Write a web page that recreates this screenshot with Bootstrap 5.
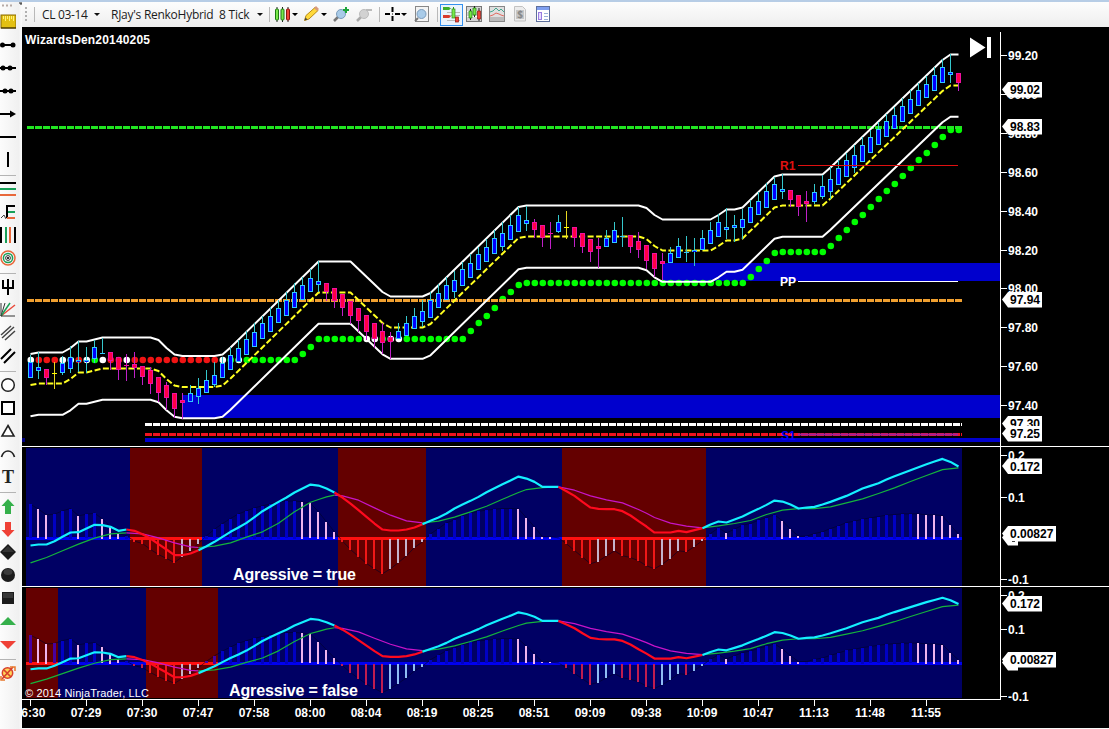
<!DOCTYPE html>
<html lang="en">
<head>
    <meta charset="UTF-8">
    <meta name="viewport" content="width=device-width, initial-scale=1.0">
    <title>CL 03-14 - Chart</title>
    <link rel="stylesheet" href="https://cdn.jsdelivr.net/npm/bootstrap@5.3.0/dist/css/bootstrap.min.css">
    <style>
        html, body {
            height: 100%;
            margin: 0;
            overflow: hidden;
        }
        body {
            background: #fafafa;
            font-family: "Liberation Sans", sans-serif;
            font-size: 12px;
            border-top: 2px solid #b7cde6;
        }
        svg {
            display: block;
            flex: none;
        }
        .draw-tools {
            width: 22px;
            flex: none;
            background: linear-gradient(90deg, #fcfcfc, #f0f0f0 85%, #fbfbfb);
        }
        .tool-gap {
            width: 16px;
            height: 6px;
            flex: none;
            padding-top: 3px;
        }
        .tool-gap::before {
            content: "";
            display: block;
            border-top: 1px solid #b4b4b4;
        }
        .chart-bar {
            height: 25px;
            flex: none;
            background: linear-gradient(#fdfdfd, #eeeeee);
            color: #1c1c1c;
            font-family: "Open Sans", "Noto Sans", sans-serif;
            font-size: 12px;
            line-height: 24px;
            white-space: pre;
        }
        .bar-split {
            width: 1px;
            height: 15px;
            background: #b9b9b9;
            flex: none;
        }
        .picker-symbol { width: 52px; margin-left: 7px; letter-spacing: -.35px; }
        .picker-period { width: 146px; margin-left: 11px; letter-spacing: -.27px; }
        .drop {
            width: 0;
            height: 0;
            flex: none;
            border: 3px solid transparent;
            border-top-color: #111;
            border-bottom: 0;
        }
        .tool-on {
            width: 23px;
            height: 22px;
            flex: none;
            border: 1px solid #3390ee;
            background: #eaf3fc;
        }
        .panels {
            background: #000;
        }
        .panels text {
            font-weight: bold;
            font-size: 12px;
            fill: #fff;
        }
        #macdTrue, #macdFalse { overflow: visible; }
        .panels .note { font-size: 16px; }
        .panels .rights { font-weight: normal; font-size: 11px; }
        .panels .tag-text { fill: #000; }
    </style>
</head>
<body>
<div class="d-flex h-100">

    <!-- Drawing tools -->
    <div class="draw-tools d-flex flex-column">
        <svg width="22" height="9" viewBox="0 2 22 9"><path d="M2 5.5h2M6 5.5h2M10 5.5h2" stroke="#b5aaa5" stroke-width="2"/><path d="M19 3h4M21 3v2" stroke="#222"/></svg>
        <svg width="16" height="23" viewBox="0 -11 16 23"><rect x="1" y="-7" width="15" height="13" fill="#e3c012" stroke="#8a6b00"/><path d="M3.5-6v3M5.5-6v5M7.5-6v3M9.5-6v5M11.5-6v3M13.5-6v5" stroke="#fff17a"/><path d="M1 6h15" stroke="#2c2200"/></svg>
        <svg width="16" height="23" viewBox="0 -11 16 23"><path d="M2 0h12" stroke="#000" stroke-width="2"/><circle cx="2.5" r="2.5"/><circle cx="13" r="2.5"/></svg>
        <svg width="16" height="23" viewBox="0 -11 16 23"><path d="M0 0h16" stroke="#000" stroke-width="2"/><circle cx="3" r="2.5"/><circle cx="10" r="2.5"/></svg>
        <svg width="16" height="23" viewBox="0 -11 16 23"><path d="M0 0h16" stroke="#000" stroke-width="2"/><circle cx="5" r="2.5"/><circle cx="11" r="2.5"/></svg>
        <svg width="16" height="23" viewBox="0 -11 16 23"><path d="M0 0h14" stroke="#000" stroke-width="2"/><path d="M10-3.5L16 0l-6 3.5z"/></svg>
        <svg width="16" height="23" viewBox="0 -11 16 23"><path d="M0 0h16" stroke="#000" stroke-width="2"/></svg>
        <svg width="16" height="23" viewBox="0 -11 16 23"><path d="M8-8v15" stroke="#000" stroke-width="2"/></svg>
        <div class="tool-gap"></div>
        <svg width="16" height="23" viewBox="0 -11 16 23"><path d="M0-6h16" stroke="#000" stroke-width="2"/><path d="M0 0h16" stroke="#18a058" stroke-width="2"/><path d="M0 6h16" stroke="#e8683a" stroke-width="2"/></svg>
        <svg width="16" height="23" viewBox="0 -11 16 23"><path d="M15-6H7V6" fill="none" stroke="#000" stroke-width="2"/><path d="M8 0h7" stroke="#18a058" stroke-width="2"/><path d="M7 6h8" stroke="#e8683a" stroke-width="2"/><path d="M1 6l3-3 2 4" fill="none" stroke="#444"/></svg>
        <svg width="16" height="23" viewBox="0 -11 16 23"><path d="M1-8V8M15-8V8" stroke="#000" stroke-width="2"/><path d="M6-8V8" stroke="#18a058" stroke-width="2"/><path d="M10-8V8" stroke="#e8683a" stroke-width="2"/></svg>
        <svg width="16" height="23" viewBox="0 -11 16 23"><g fill="none" stroke-width="1.5"><circle cx="8" r="7" stroke="#e8683a"/><circle cx="8" r="4.6" stroke="#18a058"/></g><circle cx="8" r="2.4" fill="#fff" stroke="#333"/><circle cx="8" r="1.1"/></svg>
        <div class="tool-gap"></div>
        <svg width="16" height="23" viewBox="0 -11 16 23"><path d="M3-7v8h10v-8M8-8V8" fill="none" stroke="#000" stroke-width="2"/></svg>
        <svg width="16" height="23" viewBox="0 -11 16 23"><path d="M1 6L5-7" stroke="#333"/><path d="M1 6L15-5" stroke="#e84a3a" stroke-width="1.5"/><path d="M1 6L10-7" stroke="#18a058" stroke-width="1.5"/><path d="M1-7V6h14" fill="none" stroke="#333"/></svg>
        <svg width="16" height="23" viewBox="0 -11 16 23"><path d="M1 2L11-7M2 5L14-6M5 7L15-2" stroke="#444" stroke-width="1.5"/></svg>
        <svg width="16" height="23" viewBox="0 -11 16 23"><path d="M1 3L11-7M4 7L15-4" stroke="#000" stroke-width="2"/></svg>
        <div class="tool-gap"></div>
        <svg width="16" height="23" viewBox="0 -11 16 23"><circle cx="8" r="6.3" fill="#fff" stroke="#222" stroke-width="1.5"/></svg>
        <svg width="16" height="23" viewBox="0 -11 16 23"><rect x="2" y="-6" width="12" height="12" fill="#fff" stroke="#000" stroke-width="2"/></svg>
        <svg width="16" height="23" viewBox="0 -11 16 23"><path d="M8-5.5L14 5H2z" fill="#fff" stroke="#222" stroke-width="1.6"/></svg>
        <svg width="16" height="23" viewBox="0 -11 16 23"><path d="M1.500 3C4-5 12-5 14.500 3" fill="none" stroke="#222" stroke-width="1.7"/></svg>
        <svg width="16" height="23" viewBox="0 -11 16 23"><text x="8" y="6" text-anchor="middle" font-family="Liberation Serif, serif" font-weight="bold" font-size="18" fill="#222">T</text></svg>
        <div class="tool-gap"></div>
        <svg width="16" height="23" viewBox="0 -11 16 23"><path d="M8-7l6.500 7H11v8H5V0H1.500z" fill="#35b04b"/></svg>
        <svg width="16" height="23" viewBox="0 -11 16 23"><path d="M8 8L1.500 1H5v-8h6v8h3.500z" fill="#ef4136"/></svg>
        <svg width="16" height="23" viewBox="0 -11 16 23"><path d="M8-8l8 8-8 8-8-8z" fill="#1a1a1a"/><path d="M8-6l6 6H2z" fill="#333"/></svg>
        <svg width="16" height="23" viewBox="0 -11 16 23"><circle cx="8" r="7" fill="#1c1c1c"/><ellipse cx="8" cy="-3" rx="4.500" ry="3" fill="#3c3c3c"/></svg>
        <svg width="16" height="23" viewBox="0 -11 16 23"><path d="M2-6h12V6H2z" fill="#1c1c1c"/><path d="M3-5h10v5H3z" fill="#383838"/></svg>
        <svg width="16" height="23" viewBox="0 -11 16 23"><path d="M8-4l8 8H0z" fill="#35b04b"/></svg>
        <svg width="16" height="23" viewBox="0 -11 16 23"><path d="M8 5l8-8H0z" fill="#ef4136"/></svg>
        <div class="tool-gap"></div>
        <svg width="16" height="23" viewBox="0 -11 16 23"><circle cx="7.500" r="5.200" fill="#ffd45a" stroke="#d8402c" stroke-width="1.500"/><path d="M2 6L13-6M4-3l7 7" stroke="#d8402c" stroke-width="1.700"/><path d="M10-6h5v4M1 3v4h4" fill="none" stroke="#e8782c" stroke-width="1.500"/></svg>
    </div>

    <div class="d-flex flex-column flex-grow-1">
        <!-- Chart toolbar -->
        <div class="chart-bar d-flex align-items-center">
            <svg width="12" height="25" viewBox="22 2 12 25"><path d="M26 7v15" stroke="#b0b0b0" stroke-width="2" stroke-dasharray="2 2"/></svg>
            <div class="bar-split"></div>
            <span class="picker-symbol">CL 03-14</span>
            <i class="drop"></i>
            <span class="picker-period">RJay's RenkoHybrid  8 Tick</span>
            <i class="drop"></i>
            <svg width="6" height="25"></svg>
            <div class="bar-split"></div>

            <svg width="109" height="25" viewBox="270 2 109 25">
                <path d="M277 7v15M282.500 7v15M288 7v15" stroke="#222"/>
                <g stroke="#1d7a10" fill="#79e84a"><rect x="275.500" y="9" width="3" height="11" rx="1"/><rect x="281" y="9" width="3" height="11" rx="1"/></g>
                <rect x="286.500" y="9" width="3" height="11" rx="1" fill="#f04438" stroke="#8c1710"/>
                <path d="M292 13h6l-3 3zM321 13h6l-3 3z"/>
                <path d="M304.500 20.500l1.500-5 9-8 3 3-9 8.500z" fill="#ffd93b" stroke="#b88a14"/>
                <path d="M304.500 20.500l1-3 2 2z" fill="#444"/><path d="M314 8l3 3 2-2-3-3z" fill="#d99a7c"/>
                <path d="M334 21l4-4" stroke="#777" stroke-width="2.500"/>
                <circle cx="341" cy="14" r="4.500" fill="#a9cbe8" stroke="#7b9cbc"/>
                <path d="M346 7v6M343 10h6" stroke="#1ea53a" stroke-width="2"/>
                <path d="M357 21l4-4" stroke="#aaa" stroke-width="2.500"/>
                <circle cx="364" cy="14" r="4.500" fill="#d2d2d2" stroke="#bcbcbc"/>
                <path d="M366 10h6" stroke="#bbb" stroke-width="2"/>
            </svg>
            <div class="bar-split"></div>
            <svg width="57" height="25" viewBox="380 2 57 25">
                <path d="M392.500 7v5M392.500 16v5M385 14h5M395 14h5" stroke="#000" stroke-width="2"/><path d="M392 14h1" stroke="#000"/>
                <path d="M401 13h6l-3 3z"/>
                <rect x="415.500" y="6.500" width="13" height="15" fill="#f4f4f4" stroke="#888"/>
                <path d="M415 21l3-3" stroke="#777" stroke-width="2"/><circle cx="421.500" cy="14" r="4.500" fill="#a9cbe8" stroke="#7b9cbc"/>
            </svg>
            <div class="bar-split"></div>
            <svg width="2" height="25"></svg>
            <div class="tool-on d-flex">
                <svg width="21" height="20" viewBox="441 4 21 20">
                    <path d="M447 11.500h13M447 14.500h13M447 19.500h13" stroke="#b8b8b8"/>
                    <path d="M443 6h6l2 1.500-2 1.500h-6z" fill="#3fae2c"/>
                    <path d="M443 14h6l2 1.500-2 1.500h-6z" fill="#d83a2e"/>
                    <path d="M453.500 6v11" stroke="#2f8f1e"/><rect x="452" y="8" width="3" height="9" fill="#79e84a" stroke="#2f8f1e" stroke-width=".7"/>
                    <rect x="455.500" y="16" width="3" height="5" fill="#f04438" stroke="#8c1710" stroke-width=".7"/>
                </svg>
            </div>
            <svg width="90" height="25" viewBox="463 2 90 25">
                <rect x="466.500" y="6.500" width="15" height="15" fill="#d4d4d4" stroke="#777"/><path d="M467 11.500h14M467 16.500h14" stroke="#fff"/>
                <path d="M470.500 9v11M474.500 6v11M479 8v13" stroke="#222"/>
                <path d="M469 11h3v7h-3zM473 8h3v7h-3z" fill="#79e84a" stroke="#1d7a10" stroke-width=".7"/><path d="M477.500 11h3v8h-3z" fill="#f04438" stroke="#8c1710" stroke-width=".7"/>
                <rect x="489.500" y="6.500" width="15" height="15" fill="#dfdfdf" stroke="#888"/><path d="M490 17h14v4h-14z" fill="#bbb"/>
                <path d="M490 12l3-1 3-3 3 3 2-2 3 3" fill="none" stroke="#46a890"/><path d="M490 16l3-1 3-2 3 1 2 1 3 1" fill="none" stroke="#e06a60"/>
                <path d="M514.500 6.500h8l3 3v11.500h-11z" fill="#ececec" stroke="#c2c2c2"/><rect x="516" y="10" width="8" height="9" fill="#c6c6c6"/>
                <text x="520" y="18" text-anchor="middle" font-size="10" font-weight="bold" fill="#888">$</text>
                <rect x="536.500" y="6.500" width="13" height="15" fill="#fff" stroke="#5d6f9c"/><path d="M537 7h12v3h-12z" fill="#7f9ff0"/>
                <rect x="538.500" y="12.500" width="3" height="7" fill="#e6dcff" stroke="#9a7be0"/><path d="M544 13.500h4M544 16.500h4M544 19.500h4" stroke="#9ab0d8"/>
            </svg>
        </div>

        <!-- Chart panels -->
        <div class="panels">
            <svg id="price" width="1087" height="420" viewBox="22 27 1087 420"></svg>
            <svg id="macdTrue" width="1087" height="140" viewBox="22 447 1087 140"></svg>
            <svg id="macdFalse" width="1087" height="113" viewBox="22 587 1087 113"></svg>
            <svg id="times" width="1087" height="28" viewBox="22 700 1087 28"></svg>
        </div>
    </div>
</div>

<script>
    const STEP = 8, X0 = 30.5;
    const barX = i => X0 + STEP * i;
    const rect = (x, y, w, h, fill) => `<rect x="${x}" y="${y}" width="${w}" height="${h}" fill="${fill}" shape-rendering="crispEdges"/>`;
    const line = (x1, y1, x2, y2, color, w = 1, extra = "") =>
        `<line x1="${x1}" y1="${y1}" x2="${x2}" y2="${y2}" stroke="${color}" stroke-width="${w}" ${extra}/>`;
    const poly = (pts, color, w, extra = "") =>
        `<polyline points="${pts.map(p => p.join()).join(" ")}" fill="none" stroke="${color}" stroke-width="${w}" stroke-linejoin="round" ${extra}/>`;

    // Scale label with its tick
    const scaleLabel = (y, text) => line(1001, y, 1007, y, "#fff") + `<text x="1008" y="${y + 4.5}">${text}</text>`;
    // White price marker
    const tag = (y, text, w = 34) =>
        `<path d="M1002 ${y}l6-7.500h${w}v15.500h-${w}z" fill="#fff"/>` + (text ? `<text class="tag-text" x="1010" y="${y + 4.5}">${text}</text>` : "");

    // type (b up, r down, y flat), body top, body bottom, wick top, wick bottom
    const candles = `b362,378,355,378 b367,371,352,379 r369,378,369,385 y373,373,362,389 b363,373,356,375 b357,369,346,373
b360,362,341,372 b360,362,347,373 b347,359,340,363 b353,353,338,354 r352,361,352,370 r357,370,357,380
r365,365,354,381 r364,368,352,378 r366,377,366,385 r370,384,367,394 r377,393,377,402 r385,398,382,410
r393,409,393,418 r400,403,393,419 b393,402,385,402 b388,397,378,404 b380,393,370,393 b375,385,362,387
b363,378,357,378 b355,370,347,370 b348,362,340,362 b339,355,331,355 b332,347,323,347 b323,339,316,339
b316,332,307,332 b308,323,300,323 b300,316,292,316 b292,308,283,308 b285,300,277,300 b278,292,269,292
b281,285,261,292 r283,292,283,301 r288,301,288,308 r294,308,294,316 r301,316,301,324 r308,321,308,332
r315,332,315,340 r323,339,323,348 r331,343,323,354 r337,342,332,359 b331,339,323,339 b323,336,316,336
b316,329,308,329 b311,322,300,327 b300,318,292,318 b293,308,284,308 b285,300,277,300 b280,292,271,298
b269,286,262,286 b263,278,254,278 b254,270,247,270 b247,262,239,262 b238,254,230,254 b233,247,222,251
b225,240,215,240 b215,232,207,232 b220,224,206,231 r222,230,219,238 r225,238,225,247 r233,233,222,249
b222,232,215,233 y227,227,211,239 r227,238,227,247 r233,247,233,253 r239,252,239,262 r246,249,238,268
b238,247,230,247 b230,243,222,243 b236,236,217,247 r235,247,235,253 r241,250,232,258 r245,261,245,269
r253,269,253,277 r261,264,253,280 b253,263,247,263 b246,258,238,258 b252,252,236,262 b250,252,238,266
b238,250,230,250 b230,244,222,244 b222,237,214,237 b227,230,208,239 b225,228,215,242 b219,228,209,239
b207,223,200,223 b201,215,192,215 b191,208,183,208 b184,200,177,200 b189,192,174,199 r190,200,190,207
r195,207,195,216 r201,204,191,222 b192,202,184,204 b186,197,175,199 b179,192,167,199 b168,185,160,185
b160,177,153,177 b155,168,145,173 b145,162,137,162 b137,153,130,153 b129,145,122,145 b121,137,114,137
b115,129,107,129 b106,122,98,122 b99,114,90,114 b90,106,83,106 b84,98,76,98 b75,91,67,91
b67,83,59,83 b72,75,54,83 r73,83,73,91`.split(/\s+/);

    const band = [[0,354],[1,352.5],[4,352.5],[5,348],[6,341.5],[7,341.5],[9,337.5],[15,337.5],[16,340],[17,348],[18,354.5],[19,356],
        [23,356],[24,354.5],[25,347.5],[36,261.5],[40,261.5],[44,292],[45,296.5],[49,296.5],[50,293],[61,207],[62,205.5],[76,205.5],
        [77,208],[78,215],[79,219.5],[85,219.5],[86,215],[87,209.5],[88,209.5],[89,207.5],[93,176.5],[94,174.5],[99,174.5],
        [100,167.5],[114,60],[115,54.5],[116,54.5]];

    // trailing stop: [first bar, last bar, y] runs
    const stops = [[0,33,360],[34,34,354],[35,35,347],[36,54,339],[55,55,331],[56,56,323],[57,57,316],[58,58,308],[59,59,299],[60,60,292],
        [61,61,285],[62,89,283],[90,90,277],[91,91,269],[92,92,261],[93,93,253],[94,99,252],[100,100,246],[101,101,238],[102,102,230],
        [103,103,222],[104,104,215],[105,105,207],[106,106,199],[107,107,191],[108,108,184],[109,109,176],[110,110,168],[111,111,160],
        [112,112,153],[113,113,145],[114,114,137],[115,116,130]];
    const whiteStops = [0, 4, 5, 7, 9, 12, 24, 26, 42, 43, 45, 46];
    const stopColor = i => whiteStops.includes(i) ? "#fff" : i < 24 && i !== 8 ? "#f01414" : "#00ff00";

    function drawPrice() {
        let s = rect(662, 263, 338, 18, "#0000cd") + rect(183, 395, 817, 23, "#0000cd")
            + rect(145, 438, 855, 4, "#0000cd") + rect(22, 438, 3, 4, "#000080");
        stops.forEach(([a, b, y]) => {
            for (let i = a; i <= b; i++) s += `<circle cx="${barX(i) + .3}" cy="${y}" r="3.3" fill="${stopColor(i)}"/>`;
        });
        const dash = 'stroke-dasharray="7 1" shape-rendering="crispEdges"';
        s += line(27, 127.5, 962, 127.5, "#22e622", 3, dash) + line(27, 300.5, 962, 300.5, "#f0a030", 3, dash);
        s += line(145, 424.5, 962, 424.5, "#fff", 3, dash) + line(145, 434.5, 962, 434.5, "#f01420", 3, dash);
        s += '<text x="781" y="440" style="fill:#0000ff">S1</text>';
        s += line(798, 434.5, 958, 434.5, "#a020a0", 2);

        const level = d => band.map(([i, y]) => [barX(i), y + d]);
        s += poly(level(31), "#ffff20", 2, 'stroke-dasharray="6 2.500"');
        s += poly(level(0), "#fff", 2) + poly(level(62.3), "#fff", 2);
        candles.forEach((c, i) => {
            const [top, bottom, high, low] = c.slice(1).split(",").map(Number);
            const x = barX(i), type = c[0];
            const edge = { b: "#30c8ff", r: "#f010a0", y: "#ffff00" }[type];
            const wick = { b: "#35c8cc", r: "#c020c8", y: "#e8d820" }[type];
            s += line(x, high, x, low, wick, 1);
            if (bottom === top) s += rect(x - 2.5, top, 5, 1, edge);
            else s += rect(x - 2.5, top, 5, bottom - top, edge)
                + rect(x - 1.5, top + 1, 3, Math.max(1, bottom - top - 2), type === "b" ? "#0000ff" : "#ff0044");
        });

        s += line(798, 165.5, 958, 165.5, "#e01010") + '<text x="780" y="170" style="fill:#e01010">R1</text>';
        s += line(798, 281.5, 958, 281.5, "#fff") + '<text x="780" y="286">PP</text>';
        s += '<text x="25" y="44" textLength="125">WizardsDen20140205</text>';
        s += '<path d="M970 37.500l15.500 10-15.500 10zM987 37h4v21h-4z" fill="#fff"/>';

        s += line(1000.5, 32, 1000.5, 447, "#fff");
        [[55.5, "99.20"], [94.5, "99.00"], [133.5, "98.80"], [172.5, "98.60"], [211.5, "98.40"], [250.5, "98.20"],
            [288.5, "98.00"], [327.5, "97.80"], [366.5, "97.60"], [405.5, "97.40"]].forEach(l => s += scaleLabel(...l));
        [[89.5, "99.02"], [126.5, "98.83"], [299.5, "97.94"], [423.5, "97.30"], [433.5, "97.25"]].forEach(t => s += tag(...t));
        s += line(22, 446.5, 1109, 446.5, "#fff");
        document.getElementById("price").innerHTML = s;
    }

    const macd = [-21,-18,-18,-8,5,18,19,30,41,40,35,23,27,23,13,0,-17,-33,-50,-50,-45,-35,-23,-10,5,20,33,47,64,82,96,110,123,138,
        150,162,159,150,138,123,105,85,65,45,27,24,24,27,33,43,53,63,75,90,102,113,125,139,151,163,174,186,180,170,155,155,155,142,
        128,110,93,89,88,88,82,69,52,36,18,18,18,23,19,25,31,42,51,48,57,66,78,89,101,114,111,102,90,93,95,102,110,119,128,139,150,
        158,166,177,187,196,205,214,223,231,239,230,216];
    const signal = [[0,-73],[2,-57],[4,-37],[6,-17],[8,1],[10,14],[12,17],[14,14],[16,2],[18,-13],[20,-25],[21,-27],[23,-23],[25,-13],
        [27,4],[29,20],[31,46],[33,80],[35,109],[36,117],[37,125],[38,130],[39,128],[41,115],[43,92],[45,70],[47,53],[49,47],[51,52],
        [53,64],[55,80],[57,97],[59,118],[61,138],[62,147],[64,153],[66,155],[68,145],[70,128],[72,116],[74,107],[76,87],[77,76],
        [78,63],[80,46],[82,37],[84,32],[86,38],[88,45],[90,54],[92,72],[94,85],[96,90],[98,90],[100,95],[102,107],[104,119],
        [106,135],[108,152],[110,171],[112,189],[114,207],[116,212]];
    const falling = [[12, 21], [38, 49], [66, 84]];

    // b rising, p fading above zero, r falling, c fading below zero
    const hist = `b103 p88 p71 b73 b83 b90 p68 b73 b76 p59 p35 p15 b8 r-8 r-15 r-33 r-48 r-60 r-72 c-54 c-36 c-15 b8 b28 b45 b60 b74 b83
b92 b98 b104 b110 b112 b113 p110 p106 p80 p50 p20 r-8 r-33 r-54 r-75 r-91 r-106 c-91 c-72 c-52 c-27 c-10 b14 b30 b47 b56 b69 b77 b82 b85
b88 b90 b90 p89 p62 p35 p5 p5 b2 r-16 r-36 r-56 r-76 c-68 c-52 c-37 r-52 r-57 r-67 r-82 r-91 c-77 c-59 c-37 r-40 c-24 c-6 b15 b32 p17 b28
b40 b45 b55 b63 b71 p53 p28 p7 b7 b15 b20 b30 b38 b48 b52 b58 b62 b66 b70 b72 b74 b74 p74 p71 p71 p69 p40 p13`.split(/\s+/);

    function drawMacd(id, o) {
        const y = v => +(o.zero - v * o.scale).toFixed(2);
        const inRed = x => o.red.some(([a, b]) => x >= a && x < b);
        let s = rect(26, o.top, 936, o.height, "#000064");
        o.red.forEach(([a, b]) => s += rect(a, o.top, b - a, o.height, "#640000"));
        s += rect(26, o.zero - 1.5, 936, 3, "#0000f0");
        o.red.forEach(([a, b]) => s += rect(a, o.zero - 1.5, b - a, 3, "#ff1010"));
        s += poly(hist.map((h, i) => [barX(i), y(+h.slice(1))]), "#000028", 1, 'opacity=".6"');
        hist.forEach((h, i) => {
            const v = +h.slice(1), x = barX(i), red = inRed(x);
            const color = { b: red ? "#4800a0" : "#0000c4", p: "#efb4ee", r: red ? "#f01818" : "#c01c50", c: red ? "#c4b4cc" : "#8fbcf4" }[h[0]];
            const from = v < 0 ? o.zero : y(v);
            s += rect(x - 1.5, Math.round(from), h[0] === "b" ? 3 : 2, Math.max(1, Math.round(Math.abs(v) * o.scale)), color);
        });
        // both lines switch colour where the trend flips
        const cuts = [0, ...falling.flat(), 116];
        for (let k = 0; k < cuts.length - 1; k++) {
            const a = cuts[k], b = cuts[k + 1], down = k % 2 === 1;
            s += poly(signal.filter(p => p[0] >= a && p[0] <= b).map(p => [barX(p[0]), y(p[1])]), down ? "#c814c8" : "#14b43c", 1.2);
            s += poly(macd.slice(a, b + 1).map((v, n) => [barX(a + n), y(v)]), down ? "#ff0a1e" : "#14f0ff", 2.2);
        }
        s += `<text class="note" x="${o.noteX}" y="${o.noteY}" textLength="${o.noteW}">${o.note}</text>`;
        s += line(1000.5, o.top - 1, 1000.5, o.end, "#fff");
        o.labels.forEach(l => s += scaleLabel(...l));
        s += tag(o.zero - 1, "", 10) + tag(o.tags[0], "0.172") + tag(o.tags[1], "0.00827", 48);
        s += (o.extra || "") + line(22, o.end - .5, o.lineTo, o.end - .5, "#fff");
        document.getElementById(id).innerHTML = s;
    }

    drawPrice();
    drawMacd("macdTrue", {
        top: 448, height: 138, end: 587, lineTo: 1109, zero: 538.5, scale: .333,
        red: [[130, 202], [338, 426], [562, 706]],
        note: "Agressive = true", noteX: 233, noteY: 580, noteW: 123,
        labels: [[455.5, "0.2"], [497.5, "0.1"], [579.5, "-0.1"]], tags: [466, 533.5],
        extra: line(1012, 541.5, 1015, 541.5, "#444")
    });
    drawMacd("macdFalse", {
        top: 588, height: 110, end: 700, lineTo: 1001, zero: 663.5, scale: .275,
        red: [[26, 58], [146, 218]],
        note: "Agressive = false", noteX: 229, noteY: 696, noteW: 129,
        labels: [[595.5, "0.2"], [629.5, "0.1"], [696.5, "-0.1"]], tags: [603.5, 659.5],
        extra: '<text class="rights" x="25" y="697" textLength="124">© 2014 NinjaTrader, LLC</text>'
    });

    const times = ["06:30", "07:29", "07:30", "07:47", "07:58", "08:00", "08:04", "08:19", "08:25", "08:51", "09:09", "09:38",
        "10:09", "10:47", "11:13", "11:48", "11:55"];
    document.getElementById("times").innerHTML = times.map((t, k) => {
        const x = barX(7 * k);
        return line(x, 700, x, 706, "#fff") + `<text x="${x - .5}" y="717" text-anchor="middle">${t}</text>`;
    }).join("");
</script>

<script src="https://cdn.jsdelivr.net/npm/bootstrap@5.3.0/dist/js/bootstrap.bundle.min.js"></script>
</body>
</html>
